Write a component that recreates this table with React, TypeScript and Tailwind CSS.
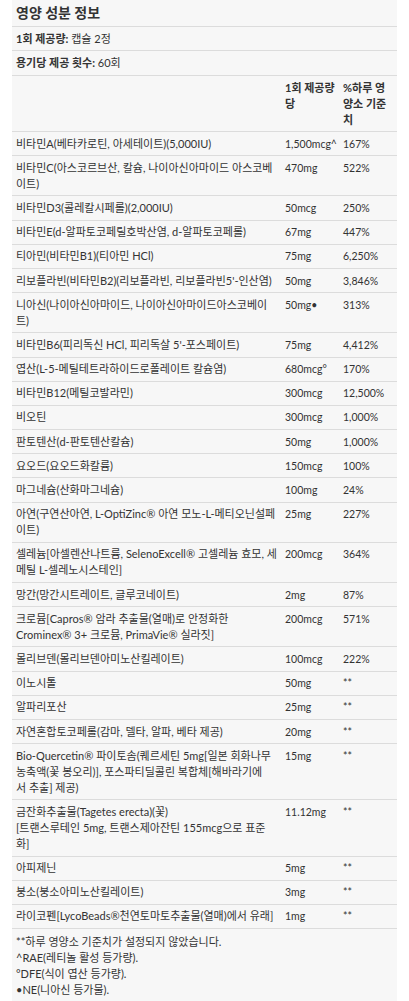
import React from "react";

type Row = { name: React.ReactNode; amount: string; dv: string };

const rows: Row[] = [
  { name: "비타민A(베타카로틴, 아세테이트)(5,000IU)", amount: "1,500mcg^", dv: "167%" },
  { name: "비타민C(아스코르브산, 칼슘, 나이아신아마이드 아스코베이트)", amount: "470mg", dv: "522%" },
  { name: "비타민D3(콜레칼시페롤)(2,000IU)", amount: "50mcg", dv: "250%" },
  { name: "비타민E(d-알파토코페릴호박산염, d-알파토코페롤)", amount: "67mg", dv: "447%" },
  { name: "티아민(비타민B1)(티아민 HCl)", amount: "75mg", dv: "6,250%" },
  { name: "리보플라빈(비타민B2)(리보플라빈, 리보플라빈5'-인산염)", amount: "50mg", dv: "3,846%" },
  { name: "니아신(나이아신아마이드, 나이아신아마이드아스코베이트)", amount: "50mg•", dv: "313%" },
  { name: "비타민B6(피리독신 HCl, 피리독살 5'-포스페이트)", amount: "75mg", dv: "4,412%" },
  { name: "엽산(L-5-메틸테트라하이드로폴레이트 칼슘염)", amount: "680mcg°", dv: "170%" },
  { name: "비타민B12(메틸코발라민)", amount: "300mcg", dv: "12,500%" },
  { name: "비오틴", amount: "300mcg", dv: "1,000%" },
  { name: "판토텐산(d-판토텐산칼슘)", amount: "50mg", dv: "1,000%" },
  { name: "요오드(요오드화칼륨)", amount: "150mcg", dv: "100%" },
  { name: "마그네슘(산화마그네슘)", amount: "100mg", dv: "24%" },
  { name: "아연(구연산아연, L-OptiZinc® 아연 모노-L-메티오닌설페이트)", amount: "25mg", dv: "227%" },
  { name: "셀레늄[아셀렌산나트륨, SelenoExcell® 고셀레늄 효모, 세메틸 L-셀레노시스테인]", amount: "200mcg", dv: "364%" },
  { name: "망간(망간시트레이트, 글루코네이트)", amount: "2mg", dv: "87%" },
  { name: "크로뮴[Capros® 암라 추출물(열매)로 안정화한 Crominex® 3+ 크로뮴, PrimaVie® 실라짓]", amount: "200mcg", dv: "571%" },
  { name: "몰리브덴(몰리브덴아미노산킬레이트)", amount: "100mcg", dv: "222%" },
  { name: "이노시톨", amount: "50mg", dv: "**" },
  { name: "알파리포산", amount: "25mg", dv: "**" },
  { name: "자연혼합토코페롤(감마, 델타, 알파, 베타 제공)", amount: "20mg", dv: "**" },
  {
    name: (
      <>
        Bio-Quercetin® 파이토솜(퀘르세틴 5mg[일본 회화나무 농축액(꽃 봉오리)], 포스파티딜콜린 복합체[해바라기에
        <br />서 추출] 제공)
      </>
    ),
    amount: "15mg",
    dv: "**",
  },
  {
    name: (
      <>
        금잔화추출물(Tagetes erecta)(꽃)
        <br />
        [트랜스루테인 5mg, 트랜스제아잔틴 155mcg으로 표준
        <br />화]
      </>
    ),
    amount: "11.12mg",
    dv: "**",
  },
  { name: "아피제닌", amount: "5mg", dv: "**" },
  { name: "붕소(붕소아미노산킬레이트)", amount: "3mg", dv: "**" },
  { name: "라이코펜[LycoBeads®천연토마토추출물(열매)에서 유래]", amount: "1mg", dv: "**" },
];

export default function App() {
  return (
    <div
      className="min-h-[1001px] bg-white px-3 text-[#333] text-[11px] leading-[16px]"
      style={{ fontFamily: 'Lato, "Noto Sans CJK KR", sans-serif' }}
    >
      <table className="w-[385px] table-fixed border-collapse bg-[#f7f7f7]">
        <colgroup>
          <col className="w-[269px]" />
          <col className="w-[58px]" />
          <col className="w-[58px]" />
        </colgroup>
        <tbody>
          <tr className="border-b border-[#dcdcdc]">
            <td colSpan={3} className="px-1 pt-[4px] pb-[4px] text-[14px] font-bold leading-[18px]">
              영양 성분 정보
            </td>
          </tr>
          <tr className="border-b border-[#dcdcdc]">
            <td colSpan={3} className="px-1 py-[3.5px]">
              <span className="font-bold">1회 제공량:</span> 캡슐 2정
            </td>
          </tr>
          <tr className="border-b border-[#dcdcdc]">
            <td colSpan={3} className="px-1 py-[4px]">
              <span className="font-bold">용기당 제공 횟수:</span> 60회
            </td>
          </tr>
          <tr className="border-b border-[#dcdcdc] align-top font-bold">
            <td className="px-1 py-[3.5px]"></td>
            <td className="px-1 py-[3.5px]">1회 제공량 당</td>
            <td className="px-1 py-[3.5px]">%하루 영양소 기준치</td>
          </tr>
          {rows.map((r, i) => (
            <tr key={i} className="border-b border-[#dcdcdc] align-top">
              <td className="pl-1 pr-[2px] py-[3.6px]">{r.name}</td>
              <td className="px-1 py-[3.6px] text-[10.5px]">{r.amount}</td>
              <td className="px-1 py-[3.6px] text-[10.5px]">{r.dv}</td>
            </tr>
          ))}
          <tr className="border-b border-[#dcdcdc]">
            <td colSpan={3} className="px-1 pt-[5px] pb-[6px]">
              <div>**하루 영양소 기준치가 설정되지 않았습니다.</div>
              <div>^RAE(레티놀 활성 등가량).</div>
              <div>°DFE(식이 엽산 등가량).</div>
              <div>•NE(니아신 등가물).</div>
            </td>
          </tr>
        </tbody>
      </table>
    </div>
  );
}
